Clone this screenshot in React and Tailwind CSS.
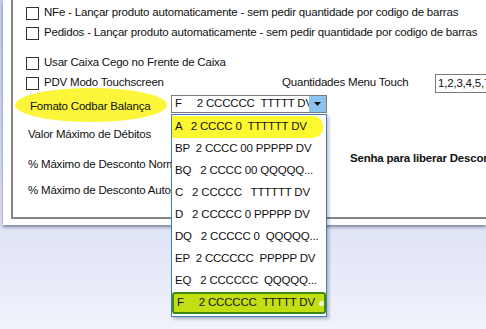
import React from 'react'

const options = [
  'A   2 CCCC 0  TTTTTT DV',
  'BP  2 CCCC 00 PPPPP DV',
  'BQ   2 CCCC 00 QQQQQQ',
  'C   2 CCCCC   TTTTTT DV',
  'D   2 CCCCC 0 PPPPP DV',
  'DQ   2 CCCCC 0  QQQQQQ',
  'EP  2 CCCCCC  PPPPP DV',
  'EQ   2 CCCCCC  QQQQQQ',
  'F     2 CCCCCC  TTTTT DV',
]

function Check({ label }) {
  return (
    <div className="flex items-center gap-[5px]">
      <span className="w-[13px] h-[13px] border border-[#333] bg-white shrink-0" />
      <span className="whitespace-nowrap">{label}</span>
    </div>
  )
}

function App() {
  return (
    <div
      className="relative w-[486px] h-[329px] overflow-hidden bg-gradient-to-b from-[#c4cdee] via-[#d3daf3] to-[#f1f2fb] text-[11.5px] tracking-[-0.2px] text-[#111]"
      style={{ fontFamily: '"Liberation Sans", Arial, sans-serif' }}
    >
      <div className="ml-[3px] h-[225px] bg-white shadow-[0_2px_3px_rgba(40,50,80,0.55)]">
        <div className="ml-[8px] h-[219px] border-l-2 border-b-2 border-[#858585]">
          <div className="flex flex-col pl-[13px] pt-[3px]">
            <div className="h-[20px] flex items-center">
              <Check label="NFe - Lançar produto automaticamente - sem pedir quantidade por codigo de barras" />
            </div>
            <div className="h-[20px] flex items-center">
              <Check label="Pedidos - Lançar produto automaticamente - sem pedir quantidade por codigo de barras" />
            </div>
            <div className="h-[10px]" />
            <div className="h-[20px] flex items-center">
              <Check label="Usar Caixa Cego no Frente de Caixa" />
            </div>
            <div className="h-[20px] flex items-center">
              <div className="w-[256px] shrink-0">
                <Check label="PDV Modo Touchscreen" />
              </div>
              <span className="w-[153px] shrink-0 whitespace-nowrap">Quantidades Menu Touch</span>
              <div className="w-[60px] shrink-0 h-[19px] border border-[#7a7a7a] pl-[2px] leading-[17px] overflow-hidden whitespace-nowrap">
                1,2,3,4,5,7,8,9
              </div>
            </div>
          </div>

          <div className="flex items-start h-[20px] mt-[4px]">
            <div className="relative w-[158px] shrink-0 h-full flex items-center">
              <span className="absolute left-[2px] top-[-9px] w-[152px] h-[34px] rounded-[50%] bg-[#fbf63a]" />
              <span className="relative ml-[17px] whitespace-nowrap">Fomato Codbar Balança</span>
            </div>
            <div className="w-[156px] shrink-0 h-[18px] -mt-[2px] border border-[#7a7a7a] bg-white flex items-center">
              <span className="flex-1 pl-[3px] whitespace-pre overflow-hidden">F     2 CCCCCC  TTTTT DV</span>
              <span className="w-[17px] h-[16px] bg-[#8dc2ef] flex items-center justify-center">
                <svg width="7" height="4" viewBox="0 0 7 4"><path d="M0 0h7L3.5 4z" fill="#111" /></svg>
              </span>
            </div>
          </div>

          <div className="h-[20px] flex items-center mt-[8px] pl-[15px]">Valor Máximo de Débitos</div>
          <div className="h-[20px] flex items-center mt-[10px]">
            <span className="w-[337px] shrink-0 pl-[15px] whitespace-nowrap overflow-hidden">% Máximo de Desconto Normal</span>
            <span className="font-bold whitespace-nowrap -mt-[13px]">Senha para liberar Desconto</span>
          </div>
          <div className="h-[20px] flex items-center mt-[6px] pl-[15px] whitespace-nowrap">% Máximo de Desconto Automático</div>
        </div>
      </div>

      <div className="absolute left-[171px] top-[114px] w-[156px] h-[203px] bg-white border border-[#3f7fbf] shadow-[2px_2px_3px_rgba(0,0,0,0.25)] flex flex-col pt-[1px]">
        {options.map((o, i) => {
          const isFirst = i === 0
          const isLast = i === options.length - 1
          let cls = 'h-[22px] flex items-center pl-[3px] whitespace-pre overflow-hidden shrink-0 relative'
          if (isFirst) cls += ' bg-[#fdf930] rounded-r-[10px] mr-[3px]'
          if (isLast) cls += ' bg-[#c3de12] border-2 border-[#3d8a12] rounded-[3px] pl-[1px]'
          const text = o.endsWith('QQQQQQ') ? o.slice(0, -1) + '...' : o
          return (
            <div key={o} className={cls}>
              <span>{text}</span>
              {isLast && <span className="ml-[4px] w-[12px] h-[5px] bg-[#eef6c8] rounded-l-full" />}
            </div>
          )
        })}
      </div>
    </div>
  )
}

export default App
